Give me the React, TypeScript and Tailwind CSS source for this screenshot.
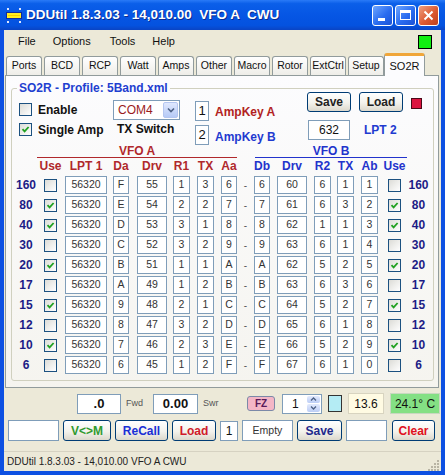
import React from 'react';

type Band = {
  band: string;
  use: boolean;
  da: string;
  drv: string;
  r1: string;
  tx: string;
  aa: string;
  db: string;
  drvB: string;
  r2: string;
  txB: string;
  ab: string;
};

const bands: Band[] = [
  { band: '160', use: false, da: 'F', drv: '55', r1: '1', tx: '3', aa: '6', db: '6', drvB: '60', r2: '6', txB: '1', ab: '1' },
  { band: '80', use: true, da: 'E', drv: '54', r1: '2', tx: '2', aa: '7', db: '7', drvB: '61', r2: '6', txB: '3', ab: '2' },
  { band: '40', use: true, da: 'D', drv: '53', r1: '3', tx: '1', aa: '8', db: '8', drvB: '62', r2: '1', txB: '1', ab: '3' },
  { band: '30', use: false, da: 'C', drv: '52', r1: '3', tx: '2', aa: '9', db: '9', drvB: '63', r2: '6', txB: '1', ab: '4' },
  { band: '20', use: true, da: 'B', drv: '51', r1: '1', tx: '1', aa: 'A', db: 'A', drvB: '62', r2: '5', txB: '2', ab: '5' },
  { band: '17', use: false, da: 'A', drv: '49', r1: '1', tx: '2', aa: 'B', db: 'B', drvB: '63', r2: '6', txB: '3', ab: '6' },
  { band: '15', use: true, da: '9', drv: '48', r1: '2', tx: '1', aa: 'C', db: 'C', drvB: '64', r2: '5', txB: '2', ab: '7' },
  { band: '12', use: false, da: '8', drv: '47', r1: '3', tx: '2', aa: 'D', db: 'D', drvB: '65', r2: '6', txB: '1', ab: '8' },
  { band: '10', use: true, da: '7', drv: '46', r1: '2', tx: '3', aa: 'E', db: 'E', drvB: '66', r2: '5', txB: '2', ab: '9' },
  { band: '6', use: false, da: '6', drv: '45', r1: '1', tx: '2', aa: 'F', db: 'F', drvB: '67', r2: '6', txB: '1', ab: '0' },
];

const tabs = ['Ports', 'BCD', 'RCP', 'Watt', 'Amps', 'Other', 'Macro', 'Rotor', 'ExtCtrl', 'Setup'];

function Check({ on }: { on?: boolean }) {
  return (
    <span className="flex h-[13px] w-[13px] shrink-0 items-center justify-center border border-[#1c5180] bg-[linear-gradient(135deg,#dcdcd7,#ffffff)]">
      {on && (
        <svg width="9" height="9" viewBox="0 0 9 9">
          <path d="M1.5 4.2 L3.6 6.4 L7.6 2" fill="none" stroke="#21a121" strokeWidth="1.8" />
        </svg>
      )}
    </span>
  );
}

function Box({ className = '', children }: { className?: string; children?: React.ReactNode }) {
  return (
    <span
      className={`flex h-[18px] shrink-0 items-center justify-center border border-[#7f9db9] bg-white text-[10.5px] text-[#333] ${className}`}
    >
      {children}
    </span>
  );
}

function Btn({ className = '', children }: { className?: string; children?: React.ReactNode }) {
  return (
    <span
      className={`flex shrink-0 items-center justify-center rounded-[3px] border border-[#003c74] bg-[linear-gradient(180deg,#ffffff,#f3f2ec_55%,#dcd8cc)] text-[12px] font-bold ${className}`}
    >
      {children}
    </span>
  );
}

function TitleButtons() {
  return (
    <div className="ml-auto mr-[6px] flex gap-[2px]">
      <span className="flex h-[21px] w-[21px] items-end rounded-[3px] border border-white bg-[linear-gradient(135deg,#6ea6ff,#2a6cf0_55%,#1a52d6)]">
        <span className="mb-[4px] ml-[5px] h-[3px] w-[7px] bg-white" />
      </span>
      <span className="flex h-[21px] w-[21px] items-center justify-center rounded-[3px] border border-white bg-[linear-gradient(135deg,#6ea6ff,#2a6cf0_55%,#1a52d6)]">
        <span className="h-[10px] w-[11px] border border-t-[3px] border-white" />
      </span>
      <span className="flex h-[21px] w-[21px] items-center justify-center rounded-[3px] border border-white bg-[linear-gradient(135deg,#f0a080,#dc5a32_55%,#c0401c)]">
        <svg width="11" height="11" viewBox="0 0 11 11">
          <path d="M1.5 1.5 L9.5 9.5 M9.5 1.5 L1.5 9.5" stroke="#fff" strokeWidth="2" />
        </svg>
      </span>
    </div>
  );
}

export default function App() {
  return (
    <div className="flex h-[475px] w-[445px] flex-col font-['Liberation_Sans',Arial,sans-serif] text-[#111]">
      {/* title bar */}
      <div className="flex h-[30px] shrink-0 items-center bg-[linear-gradient(180deg,#2a7af7_0%,#0b5fe9_12%,#0656e4_50%,#0452df_85%,#0a44c4_100%)]">
        <svg className="ml-[5px]" width="18" height="17" viewBox="0 0 18 17">
          <path d="M2 1 L4 3 M4 1 L2 3 M14 1 L16 3 M16 1 L14 3 M2 14 L4 16 M4 14 L2 16 M14 14 L16 16 M16 14 L14 16" stroke="#dfe8ff" strokeWidth="1" />
          <rect x="1.5" y="5.5" width="15" height="6" fill="#ffee22" stroke="#102a9a" />
          <line x1="3" y1="8.5" x2="15" y2="8.5" stroke="#f8d000" />
        </svg>
        <span className="ml-[3px] whitespace-pre text-[13.5px] font-bold text-white [text-shadow:1px_1px_0_#0a2a90]">
          DDUtil 1.8.3.03 - 14,010.00  VFO A  CWU
        </span>
        <TitleButtons />
      </div>

      {/* window body */}
      <div className="flex flex-1 flex-col border-x-[4px] border-b-[4px] border-[#0d50e2] bg-[#ece9d8]">
        {/* menu */}
        <div className="flex h-[23px] shrink-0 items-center text-[11px]">
          <span className="ml-[14px]">File</span>
          <span className="ml-[17px]">Options</span>
          <span className="ml-[19px]">Tools</span>
          <span className="ml-[17px]">Help</span>
          <span className="ml-auto mr-[9px] mt-[1px] h-[14px] w-[14px] border border-black bg-[#11ee11]" />
        </div>

        {/* tabs */}
        <div className="flex h-[22px] shrink-0 items-end pl-[2px]">
          {tabs.map((t) => (
            <span
              key={t}
              className="mr-[2px] flex h-[19px] w-[36px] items-center justify-center rounded-t-[3px] border border-b-0 border-[#919b9c] bg-[linear-gradient(180deg,#ffffff,#eeede8)] text-[10.5px]"
            >
              {t}
            </span>
          ))}
          <span className="relative z-10 -mb-[1px] -ml-[2px] flex h-[23px] w-[41px] items-center justify-center rounded-t-[3px] border-x border-t-[3px] border-x-[#919b9c] border-t-[#f0a63a] bg-[#fcfcfe] text-[11px]">
            SO2R
          </span>
        </div>

        {/* tab panel */}
        <div className="ml-[1px] mr-[2px] shrink-0 border border-[#919b9c] bg-[linear-gradient(180deg,#fcfcfe,#f5f4ef)] pb-[6px] pl-[5px] pr-[4px] pt-[5px]">
          <fieldset className="rounded-[3px] border border-[#d0d0bf] pb-[6px]">
            <legend className="ml-[5px] px-[2px] text-[12px] font-bold leading-[14px] text-[#1f3fd0]">
              SO2R - Profile: 5Band.xml
            </legend>

            {/* top controls */}
            <div className="-mt-[3px] flex h-[51px]">
              <div className="ml-[7px] flex w-[94px] flex-col">
                <div className="mt-[11px] flex h-[13px] items-center gap-[6px]">
                  <Check />
                  <span className="text-[12px] font-bold">Enable</span>
                </div>
                <div className="mt-[7px] flex h-[13px] items-center gap-[6px]">
                  <Check on />
                  <span className="whitespace-nowrap text-[12px] font-bold">Single Amp</span>
                </div>
              </div>
              <div className="flex w-[82px] flex-col">
                <div className="mt-[8px] flex h-[20px] w-[67px] items-center border border-[#7f9db9] bg-white">
                  <span className="ml-[4px] flex-1 text-[12px] text-[#9b1c1c]">COM4</span>
                  <span className="mr-[1px] flex h-[16px] w-[15px] items-center justify-center rounded-[2px] border border-[#b4c6f0] bg-[linear-gradient(180deg,#dfe8fe,#b6caf6)]">
                    <svg width="8" height="6" viewBox="0 0 8 6">
                      <path d="M1 1.5 L4 4.5 L7 1.5" fill="none" stroke="#4d6185" strokeWidth="1.6" />
                    </svg>
                  </span>
                </div>
                <span className="ml-[4px] mt-[2px] whitespace-nowrap text-[12px] font-bold leading-[14px]">TX Switch</span>
              </div>
              <div className="flex w-[112px] flex-col">
                <div className="mt-[9px] flex items-center">
                  <span className="flex h-[20px] w-[14px] items-center justify-center border border-[#7f9db9] bg-white text-[13px]">1</span>
                  <span className="ml-[6px] mt-[2px] whitespace-nowrap text-[12px] font-bold text-[#b22222]">AmpKey A</span>
                </div>
                <div className="mt-[3px] flex items-center">
                  <span className="flex h-[20px] w-[14px] items-center justify-center border border-[#7f9db9] bg-white text-[13px]">2</span>
                  <span className="ml-[6px] mt-[4px] whitespace-nowrap text-[12px] font-bold text-[#1f3ad0]">AmpKey B</span>
                </div>
              </div>
              <div className="flex flex-col">
                <div className="flex items-center">
                  <Btn className="h-[20px] w-[44px] text-[#222]">Save</Btn>
                  <Btn className="ml-[8px] h-[20px] w-[44px] text-[#222]">Load</Btn>
                  <span className="ml-[8px] mt-[2px] h-[11px] w-[11px] border border-[#4a0a18] bg-[#dc1440]" />
                </div>
                <div className="mt-[8px] flex items-center">
                  <span className="ml-[1px] flex h-[20px] w-[42px] items-center justify-center border border-[#7f9db9] bg-white text-[12px]">632</span>
                  <span className="ml-[14px] text-[12px] font-bold text-[#1f3ad0]">LPT 2</span>
                </div>
              </div>
            </div>

            {/* VFO headings */}
            <div className="flex h-[15px]">
              <div className="ml-[25px] flex w-[200px] justify-center border-b border-[#b0282c]">
                <span className="mt-[2px] text-[12px] font-bold leading-[12px] text-[#b0282c]">VFO A</span>
              </div>
              <div className="ml-[18px] flex w-[152px] justify-center border-b border-[#2233cc]">
                <span className="mt-[2px] text-[12px] font-bold leading-[12px] text-[#2233cc]">VFO B</span>
              </div>
            </div>

            {/* column headers */}
            <div className="mt-[1px] flex h-[14px] items-center whitespace-nowrap text-[12px] font-bold leading-[14px]">
              <span className="w-[28px]" />
              <span className="ml-[4px] flex w-[13px] justify-center text-[#b0282c]">Use</span>
              <span className="ml-[8px] flex w-[42px] justify-center text-[#b0282c]">LPT 1</span>
              <span className="ml-[6px] flex w-[16px] justify-center text-[#b0282c]">Da</span>
              <span className="ml-[8px] flex w-[30px] justify-center text-[#b0282c]">Drv</span>
              <span className="ml-[6px] flex w-[17px] justify-center text-[#b0282c]">R1</span>
              <span className="ml-[7px] flex w-[17px] justify-center text-[#b0282c]">TX</span>
              <span className="ml-[7px] flex w-[16px] justify-center text-[#b0282c]">Aa</span>
              <span className="w-[17px]" />
              <span className="flex w-[16px] justify-center text-[#2233cc]">Db</span>
              <span className="ml-[7px] flex w-[30px] justify-center text-[#2233cc]">Drv</span>
              <span className="ml-[7px] flex w-[17px] justify-center text-[#2233cc]">R2</span>
              <span className="ml-[6px] flex w-[17px] justify-center text-[#2233cc]">TX</span>
              <span className="ml-[7px] flex w-[17px] justify-center text-[#2233cc]">Ab</span>
              <span className="ml-[10px] flex w-[13px] justify-center text-[#2233cc]">Use</span>
            </div>

            {/* band rows */}
            <div className="mt-[3px] flex flex-col gap-[2px]">
              {bands.map((b) => (
                <div key={b.band} className="flex h-[18px] items-center">
                  <span className="w-[28px] text-center text-[12px] font-bold text-[#1c1c86]">{b.band}</span>
                  <span className="ml-[4px]">
                    <Check on={b.use} />
                  </span>
                  <Box className="ml-[8px] w-[42px]">56320</Box>
                  <Box className="ml-[6px] w-[16px]">{b.da}</Box>
                  <Box className="ml-[8px] w-[30px]">{b.drv}</Box>
                  <Box className="ml-[6px] w-[17px]">{b.r1}</Box>
                  <Box className="ml-[7px] w-[17px]">{b.tx}</Box>
                  <Box className="ml-[7px] w-[16px]">{b.aa}</Box>
                  <span className="w-[17px] text-center text-[10px] text-[#555]">-</span>
                  <Box className="w-[16px]">{b.db}</Box>
                  <Box className="ml-[7px] w-[30px]">{b.drvB}</Box>
                  <Box className="ml-[7px] w-[17px]">{b.r2}</Box>
                  <Box className="ml-[6px] w-[17px]">{b.txB}</Box>
                  <Box className="ml-[7px] w-[17px]">{b.ab}</Box>
                  <span className="ml-[10px]">
                    <Check on={b.use} />
                  </span>
                  <span className="ml-[4px] w-[27px] text-center text-[12px] font-bold text-[#1c1c86]">{b.band}</span>
                </div>
              ))}
            </div>
          </fieldset>
        </div>

        {/* bottom controls */}
        <div className="flex flex-1 flex-col pt-[5px]">
          <div className="flex h-[21px] items-center">
            <span className="ml-[73px] flex h-[20px] w-[44px] items-center justify-center border border-[#7f9db9] bg-white text-[13px] font-bold">.0</span>
            <span className="ml-[5px] w-[27px] text-[9px] text-[#555]">Fwd</span>
            <span className="flex h-[20px] w-[45px] items-center justify-center border border-[#7f9db9] bg-white text-[13px] font-bold">0.00</span>
            <span className="ml-[5px] w-[44px] text-[9px] text-[#555]">Swr</span>
            <span className="flex h-[15px] w-[28px] items-center justify-center rounded-[3px] border border-[#7b89a8] bg-[#f4b6c6] text-[10px] font-bold text-[#5a1a5a]">FZ</span>
            <div className="ml-[7px] flex h-[20px] w-[40px] items-center border border-[#7f9db9] bg-white">
              <span className="ml-[9px] flex-1 text-[12px]">1</span>
              <div className="mr-[1px] flex h-[16px] w-[13px] flex-col gap-[1px]">
                <span className="flex flex-1 items-center justify-center rounded-[2px] bg-[linear-gradient(180deg,#e2eafd,#bccdf5)]">
                  <svg width="7" height="4" viewBox="0 0 7 4">
                    <path d="M1 3.5 L3.5 1 L6 3.5" fill="none" stroke="#4d6185" strokeWidth="1.3" />
                  </svg>
                </span>
                <span className="flex flex-1 items-center justify-center rounded-[2px] bg-[linear-gradient(180deg,#e2eafd,#bccdf5)]">
                  <svg width="7" height="4" viewBox="0 0 7 4">
                    <path d="M1 0.5 L3.5 3 L6 0.5" fill="none" stroke="#4d6185" strokeWidth="1.3" />
                  </svg>
                </span>
              </div>
            </div>
            <span className="ml-[6px] h-[17px] w-[14px] border border-[#333] bg-[#b4ecf4]" />
            <span className="ml-[6px] flex h-[21px] w-[36px] items-center justify-center border border-[#d8d4c0] bg-[#fffbe3] text-[12px]">13.6</span>
            <span className="ml-[6px] flex h-[21px] w-[50px] items-center justify-center border border-[#c8d8c0] bg-[#84e084] text-[12px]">24.1° C</span>
          </div>
          <div className="mt-[6px] flex h-[21px] items-center gap-[4px] pl-[4px]">
            <span className="h-[21px] w-[51px] border border-[#7f9db9] bg-white" />
            <Btn className="h-[21px] w-[48px] text-[#2f9a2f]">V&lt;&gt;M</Btn>
            <Btn className="h-[21px] w-[53px] text-[#1a2fd6]">ReCall</Btn>
            <Btn className="h-[21px] w-[44px] text-[#d01a2a]">Load</Btn>
            <span className="flex h-[20px] w-[18px] items-center justify-center border border-[#7f9db9] bg-white text-[12px]">1</span>
            <span className="flex h-[21px] w-[51px] items-center justify-center border border-[#7f9db9] bg-white text-[10.5px] text-[#333]">Empty</span>
            <Btn className="h-[21px] w-[45px] text-[#1f2a8c]">Save</Btn>
            <span className="h-[21px] w-[41px] border border-[#7f9db9] bg-white" />
            <Btn className="ml-[1px] h-[21px] w-[43px] text-[#e01020]">Clear</Btn>
          </div>
        </div>

        {/* status bar */}
        <div className="flex h-[20px] shrink-0 items-center border-t border-[#d6d2c2] pl-[3px]">
          <span className="whitespace-pre text-[10px] text-[#222]">DDUtil 1.8.3.03 - 14,010.00 VFO A CWU</span>
          <svg className="ml-auto mr-[1px] mt-[6px]" width="12" height="12" viewBox="0 0 12 12">
            <g fill="#b8b4a4">
              <rect x="9" y="1" width="2" height="2" />
              <rect x="6" y="4" width="2" height="2" />
              <rect x="9" y="4" width="2" height="2" />
              <rect x="3" y="7" width="2" height="2" />
              <rect x="6" y="7" width="2" height="2" />
              <rect x="9" y="7" width="2" height="2" />
              <rect x="0" y="10" width="2" height="2" />
              <rect x="3" y="10" width="2" height="2" />
              <rect x="6" y="10" width="2" height="2" />
              <rect x="9" y="10" width="2" height="2" />
            </g>
          </svg>
        </div>
      </div>
    </div>
  );
}
